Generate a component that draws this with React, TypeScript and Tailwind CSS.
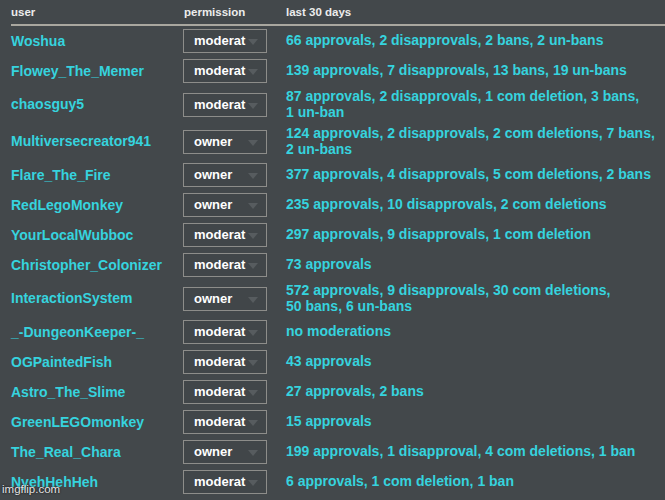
import React from 'react';

type Row = {
  user: string;
  role: 'moderat' | 'owner';
  stats: string;
};

const ROWS: Row[] = [
  { user: 'Woshua', role: 'moderat', stats: '66 approvals, 2 disapprovals, 2 bans, 2 un-bans' },
  { user: 'Flowey_The_Memer', role: 'moderat', stats: '139 approvals, 7 disapprovals, 13 bans, 19 un-bans' },
  { user: 'chaosguy5', role: 'moderat', stats: '87 approvals, 2 disapprovals, 1 com deletion, 3 bans,\n1 un-ban' },
  { user: 'Multiversecreator941', role: 'owner', stats: '124 approvals, 2 disapprovals, 2 com deletions, 7 bans,\n2 un-bans' },
  { user: 'Flare_The_Fire', role: 'owner', stats: '377 approvals, 4 disapprovals, 5 com deletions, 2 bans' },
  { user: 'RedLegoMonkey', role: 'owner', stats: '235 approvals, 10 disapprovals, 2 com deletions' },
  { user: 'YourLocalWubboc', role: 'moderat', stats: '297 approvals, 9 disapprovals, 1 com deletion' },
  { user: 'Christopher_Colonizer', role: 'moderat', stats: '73 approvals' },
  { user: 'InteractionSystem', role: 'owner', stats: '572 approvals, 9 disapprovals, 30 com deletions,\n50 bans, 6 un-bans' },
  { user: '_-DungeonKeeper-_', role: 'moderat', stats: 'no moderations' },
  { user: 'OGPaintedFish', role: 'moderat', stats: '43 approvals' },
  { user: 'Astro_The_Slime', role: 'moderat', stats: '27 approvals, 2 bans' },
  { user: 'GreenLEGOmonkey', role: 'moderat', stats: '15 approvals' },
  { user: 'The_Real_Chara', role: 'owner', stats: '199 approvals, 1 disapproval, 4 com deletions, 1 ban' },
  { user: 'NyehHehHeh', role: 'moderat', stats: '6 approvals, 1 com deletion, 1 ban' },
];

function RoleSelect({ role }: { role: Row['role'] }) {
  return (
    <div className="relative flex h-[24px] w-[84px] items-center border border-[#8d8d8a] bg-[#414649] pl-[10px]">
      <svg className="absolute right-[8px] top-[9px]" width="10" height="6" viewBox="0 0 10 6">
        <path d="M0 0 L10 0 L5 6 Z" fill="#575c5f" />
      </svg>
      <span className="relative text-[13px] font-bold text-white">{role}</span>
    </div>
  );
}

export default function App() {
  return (
    <div className="relative h-[500px] w-[665px] overflow-hidden bg-[#43484b] font-['Liberation_Sans',Arial,sans-serif]">
      <div className="ml-[11px] grid h-[26px] grid-cols-[172px_103px_1fr] items-center border-b-2 border-[#a9a79f] pt-[1px] text-[11.5px] font-bold text-[#ececec]">
        <div>user</div>
        <div className="pl-[1px]">permission</div>
        <div>last 30 days</div>
      </div>

      <div className="ml-[11px] flex flex-col">
        {ROWS.map((r) => (
          <div key={r.user} className="grid grid-cols-[172px_103px_1fr] items-center py-[3px] text-[14px] font-bold text-[#36d3de]">
            <div>{r.user}</div>
            <RoleSelect role={r.role} />
            <div className="whitespace-pre-line leading-[15.5px]">{r.stats}</div>
          </div>
        ))}
      </div>

      <div className="absolute bottom-[2px] left-[2px] text-[11.5px] text-[#e6e6e6] [text-shadow:0_0_2px_#000]">
        imgflip.com
      </div>
    </div>
  );
}
